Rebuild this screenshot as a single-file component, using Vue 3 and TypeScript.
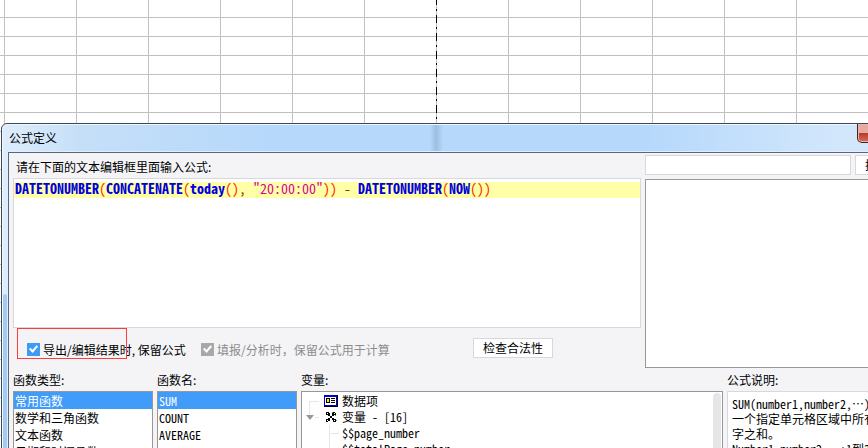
<script setup lang="ts">
import { ref } from 'vue'

interface Token {
  text: string
  kind: 'fn' | 'paren' | 'str' | 'op'
}

const tokens: Token[] = [
  { text: 'DATETONUMBER', kind: 'fn' },
  { text: '(', kind: 'paren' },
  { text: 'CONCATENATE', kind: 'fn' },
  { text: '(', kind: 'paren' },
  { text: 'today', kind: 'fn' },
  { text: '()', kind: 'paren' },
  { text: ', ', kind: 'op' },
  { text: '"20:00:00"', kind: 'str' },
  { text: '))', kind: 'paren' },
  { text: ' - ', kind: 'op' },
  { text: 'DATETONUMBER', kind: 'fn' },
  { text: '(', kind: 'paren' },
  { text: 'NOW', kind: 'fn' },
  { text: '())', kind: 'paren' },
]

const keyword = ref('')
const keepOnExport = ref(true)
const keepOnSubmit = ref(true)

const categories = ['常用函数', '数学和三角函数', '文本函数', '日期和时间函数']
const functions = ['SUM', 'COUNT', 'AVERAGE']
const category = ref(0)
const fn = ref(0)
</script>

<template>
  <main class="sheet" lang="zh-CN">
    <div class="page-break"></div>
    <section class="dialog" aria-labelledby="dialog-title">
      <header class="titlebar">
        <h1 id="dialog-title">公式定义</h1>
        <button class="close" type="button" aria-label="关闭"></button>
      </header>
      <div class="client">
        <div class="upper">
          <div class="left">
            <p id="editor-label" class="prompt">请在下面的文本编辑框里面输入公式:</p>
            <div class="editor" role="textbox" aria-labelledby="editor-label" contenteditable="true" spellcheck="false">
              <div class="code-line"><span v-for="(t, i) in tokens" :key="i" :class="t.kind">{{ t.text }}</span></div>
            </div>
            <div class="options">
              <label class="check"><input v-model="keepOnExport" type="checkbox"><span>导出/编辑结果时, 保留公式</span></label>
              <label class="check muted"><input v-model="keepOnSubmit" type="checkbox" disabled><span>填报/分析时，保留公式用于计算</span></label>
              <button class="plain verify" type="button">检查合法性</button>
              <div class="highlight"></div>
            </div>
          </div>
          <div class="right">
            <div class="search">
              <input v-model="keyword" type="text" aria-label="搜索">
              <button class="plain" type="button">搜索</button>
            </div>
            <div class="results"></div>
          </div>
        </div>
        <div class="lower">
          <div class="column">
            <h2>函数类型:</h2>
            <ul class="list">
              <li v-for="(c, i) in categories" :key="c" :class="{ selected: i === category }" @click="category = i">{{ c }}</li>
            </ul>
          </div>
          <div class="column">
            <h2>函数名:</h2>
            <ul class="list mono">
              <li v-for="(f, i) in functions" :key="f" :class="{ selected: i === fn }" @click="fn = i">{{ f }}</li>
            </ul>
          </div>
          <div class="column variables">
            <h2>变量:</h2>
            <div class="list tree">
              <ul>
                <li>
                  <svg class="branch" width="22" height="16" viewBox="0 0 22 16" shape-rendering="crispEdges"><path d="M7 8h10v1H8v7H7z" fill="#e6e6e6" /></svg>
                  <svg class="icon" width="14" height="12" viewBox="0 0 14 12" shape-rendering="crispEdges">
                    <path fill="#000" d="M0 0h14v12H0z" /><path fill="#fff" d="M1 2h11v8H1z" />
                    <path fill="#0000d8" d="M0 0h13v2H0zM0 2h1v9H0zM12 2h1v9h-1zM0 10h13v1H0z" />
                    <path fill="#000" d="M2 3h4v5H2zM7 3h4v1H7zM7 5h4v1H7zM7 7h4v1H7z" /><path fill="#ffe800" d="M3 4h2v3H3z" />
                  </svg>
                  <span>数据项</span>
                </li>
                <li>
                  <svg class="branch" width="22" height="16" viewBox="0 0 22 16"><path d="M7 0h1v6H7zM13 8h4v1h-4z" fill="#e6e6e6" /><path d="M4 6h8L8 11z" fill="#999" /></svg>
                  <svg class="icon" width="14" height="12" viewBox="0 0 14 12" shape-rendering="crispEdges">
                    <path fill="#000" d="M2 1h3v1h1v3H4V4H2zM9 1h2v1h1v2h-2v1H8V2h1zM6 5h2v2H6zM4 7h2v3H4v1H2V8h2zM8 7h2v1h2v3H9V9H8z" />
                    <path fill="#fff" d="M3 2h1v1H3zM10 2h1v1h-1zM3 9h1v1H3zM10 9h1v1h-1z" />
                    <path fill="#30b840" d="M8 1h1v1H8zM11 4h1v1h-1zM12 9h1v1h-1z" />
                  </svg>
                  <span>变量<span class="mono"> - [16]</span></span>
                </li>
                <li class="leaf"><svg class="branch" width="40" height="16" viewBox="0 0 40 16" shape-rendering="crispEdges"><path d="M27 0h1v8h9v1h-9v7h-1z" fill="#e6e6e6" /></svg><span class="mono">$$page_number</span></li>
                <li class="leaf"><svg class="branch" width="40" height="16" viewBox="0 0 40 16" shape-rendering="crispEdges"><path d="M27 0h1v8h9v1h-9v7h-1z" fill="#e6e6e6" /></svg><span class="mono">$$totalPage_number</span></li>
              </ul>
              <div class="scrollbar"></div>
            </div>
          </div>
          <div class="column notes">
            <h2>公式说明:</h2>
            <div class="description">
              <p><span class="mono">SUM(number1,number2,</span>…<span class="mono">)</span></p>
              <p>一个指定单元格区域中所有数</p>
              <p>字之和。</p>
              <p><span class="mono">Number1,number2,</span>…<span class="mono">:1</span>到<span class="mono">30</span></p>
            </div>
          </div>
        </div>
      </div>
    </section>
  </main>
</template>

<style>
body {
  overflow: hidden;
}
</style>

<style scoped>
* {
  box-sizing: border-box;
}
h1, h2, p, ul {
  margin: 0;
  padding: 0;
  font-weight: 400;
  list-style: none;
}
.sheet {
  position: relative;
  height: 100vh;
  overflow: hidden;
  color: #000;
  font: 12px/16px "Noto Sans CJK SC", sans-serif;
  white-space: nowrap;
  background:
    repeating-linear-gradient(90deg, transparent 0 4px, #c0c0c0 4px 5px, transparent 5px 72px),
    repeating-linear-gradient(180deg, #fff 0 17px, #c0c0c0 17px 18px, #fff 18px 19px);
}
.mono {
  font-family: "Noto Sans Mono CJK SC", "Liberation Mono", monospace;
  font-size: 12px;
  white-space: pre;
}
.page-break {
  position: absolute;
  top: 0;
  left: 436px;
  width: 1px;
  height: 123px;
  background: repeating-linear-gradient(180deg, #000 0 5px, #c0c0c0 5px 9px, #000 9px 11px, #c0c0c0 11px 15px, #000 15px 18px);
}
.dialog {
  position: absolute;
  top: 123px;
  left: 1px;
  right: -140px;
  padding: 0 6px 6px;
  border: 1px solid #3c4a58;
  border-radius: 6px 6px 0 0;
  background:
    linear-gradient(transparent 170px, #a5cbf3 171px) left / 6px 100% no-repeat,
    linear-gradient(90deg, transparent 428px, #9dbfdf 434px, transparent 441px) top / 100% 28px no-repeat,
    linear-gradient(90deg, #deedfc 0, #c5dff8 80px, #b5d8fb 280px, #b5d8fb 640px, #d3e7fc 840px);
  box-shadow: inset 1px 1px #f0f8ff;
}
.titlebar {
  display: flex;
  justify-content: space-between;
  align-items: flex-start;
  height: 28px;
}
h1 {
  padding: 6px 1px;
  font-size: 12px;
}
.close {
  width: 144px;
  height: 19px;
  padding: 0;
  border: 1px solid #4a2020;
  border-top: 0;
  border-radius: 0 0 5px 5px;
  background: linear-gradient(#e7aaa0 0 9px, #b93a28 9px, #d0705a);
  box-shadow: inset 0 0 0 1px #e9b8ae;
}
.client {
  padding: 2px 4px 4px;
  border: 1px solid #59677a;
  background: #f4f4f7;
  box-shadow: 0 0 0 1px #dfefff;
}
.upper {
  display: flex;
  gap: 4px;
}
.left {
  flex: 1;
}
.right {
  display: flex;
  flex-direction: column;
  gap: 4px;
  width: 351px;
}
.prompt {
  height: 23px;
  padding: 4px 3px;
}
.editor {
  height: 150px;
  padding-top: 3px;
  border: 1px solid #d8d8dc;
  background: #fff;
  outline: 0;
}
.code-line {
  height: 16px;
  padding-left: 1px;
  background: #ffffa8;
  font: 14px/12px "Noto Sans Mono CJK SC", "DejaVu Sans Mono", monospace;
  white-space: pre;
}
.fn {
  color: #0000e0;
  font-weight: 700;
}
.paren {
  color: #ff2a00;
}
.str {
  color: #dc009c;
}
.op {
  color: #804000;
}
.options {
  position: relative;
  display: flex;
  align-items: center;
  height: 40px;
  padding-left: 14px;
}
.check {
  display: flex;
  align-items: center;
  gap: 3px;
  width: 174px;
  padding-top: 3px;
}
.check input {
  appearance: none;
  display: grid;
  place-items: start center;
  width: 13px;
  height: 13px;
  margin: 0;
  padding-top: 1px;
  background: #3d9af5;
}
.check input:checked::after {
  content: "";
  width: 3px;
  height: 6px;
  border: solid #fff;
  border-width: 0 2px 2px 0;
  transform: rotate(42deg);
}
.muted {
  width: 272px;
  color: #8c8c8c;
}
.check input:disabled {
  background: #a8a8a8;
}
.plain {
  height: 20px;
  padding: 0 9px;
  border: 1px solid #d8d8dc;
  background: #fff;
  color: #000;
  font: inherit;
}
.verify {
  width: 80px;
}
.highlight {
  position: absolute;
  top: 0;
  left: 4px;
  width: 110px;
  height: 31px;
  border: 1px solid #ff3b3b;
  pointer-events: none;
}
.search {
  display: flex;
  gap: 4px;
}
.search input {
  width: 206px;
  height: 20px;
  padding: 0 4px;
  border: 1px solid #d8d8dc;
  background: #fff;
  font: inherit;
  outline: 0;
}
.search .plain {
  flex: 1;
  text-align: left;
}
.results {
  flex: 1;
  border: 1px solid #979799;
  background: #fff;
}
.lower {
  display: flex;
  gap: 4px;
}
.column {
  width: 140px;
}
.variables {
  flex: 1;
}
.notes {
  width: 269px;
}
h2 {
  height: 23px;
  padding-top: 4px;
  font-size: 12px;
}
.list {
  height: 120px;
  overflow: hidden;
  border: 1px solid #979799;
  background: #fff;
}
.list li {
  height: 17px;
  padding-left: 1px;
  line-height: 17px;
}
.list .selected {
  background: #419bf9;
  color: #fff;
}
.tree {
  display: flex;
  justify-content: space-between;
  padding-top: 1px;
}
.tree li {
  display: flex;
  align-items: center;
  height: 16px;
  padding: 0;
  line-height: 16px;
}
.icon {
  margin-right: 4px;
}
.scrollbar {
  width: 8px;
  margin: 0 1px;
  border-radius: 4px;
  background: #e6e6e6;
}
.description {
  height: 120px;
  padding: 4px;
  border: 1px solid #d8d8dc;
  background: #fff;
  line-height: 15px;
}
</style>
